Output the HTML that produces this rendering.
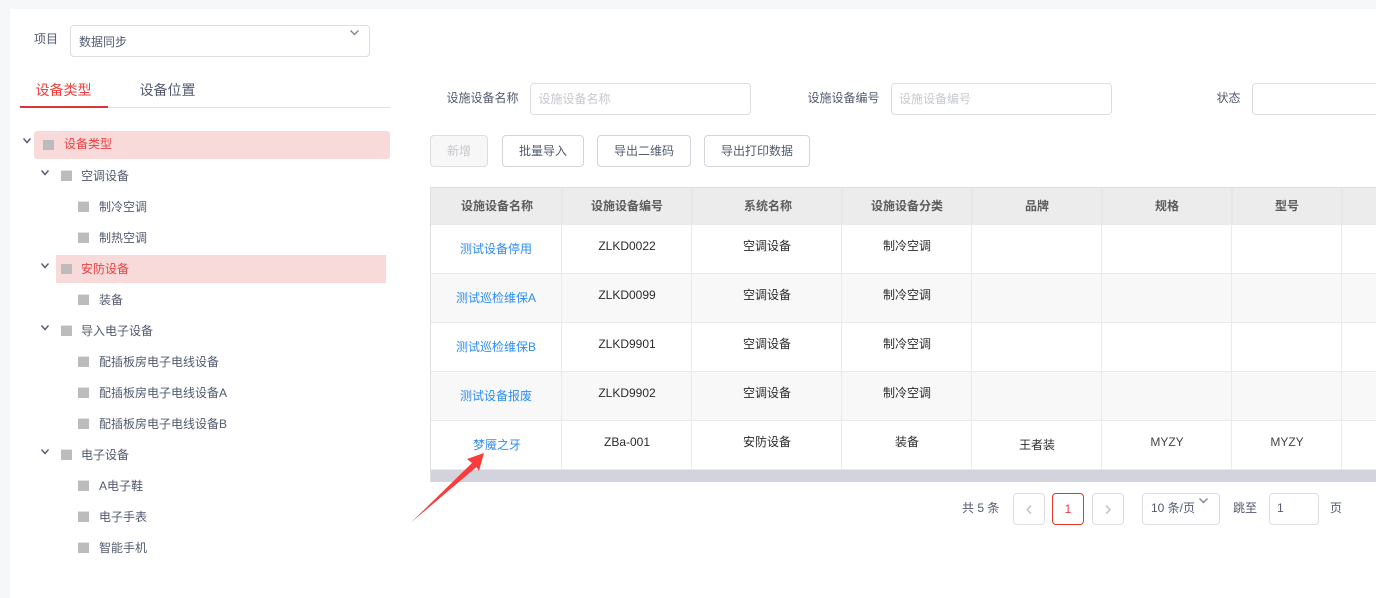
<!DOCTYPE html>
<html lang="zh">
<head>
<meta charset="utf-8">
<title>设施设备</title>
<style>
html,body{margin:0;padding:0;width:1376px;height:598px;overflow:hidden;background:#f5f7f9}
body{position:relative;font-family:"Liberation Sans","Noto Sans CJK SC",sans-serif;font-size:12px;color:#515a6e}
#w{position:absolute;left:10px;top:9px;width:1366px;height:589px;background:#fff}
.a{position:absolute;box-sizing:border-box}
.t{position:absolute;white-space:nowrap;line-height:20px}
.c{position:absolute;white-space:nowrap;line-height:20px;text-align:center;color:#2b2b2b}
.h{position:absolute;white-space:nowrap;line-height:20px;text-align:center;color:#5c5c5c;font-weight:bold;top:196px}
.l{color:#2d8cf0}
.box{position:absolute;box-sizing:border-box;border:1px solid #dcdee2;border-radius:4px;background:#fff}
.btn{position:absolute;box-sizing:border-box;border:1px solid #d3d4dc;border-radius:4px;background:#fff;height:32px;top:135px;line-height:30px;text-align:center;color:#515a6e}
.f{position:absolute;width:11px;height:11px;background:#bcbcbc;border-top:1px solid #e2e2e2;box-sizing:border-box}
.r{color:#ed3f3f}
.v{position:absolute;top:188px;width:1px;height:281px;background:#e8eaec}
.vh{position:absolute;top:188px;width:2px;height:36px;background:#e7e7e9}
.hl{position:absolute;top:224px;left:431px;width:945px;height:1px;background:#e8eaec}
svg{position:absolute;overflow:visible}
</style>
</head>
<body>
<div id="w"></div>

<span class="t" style="left:34px;top:29px">项目</span>
<div class="box" style="left:70px;top:25px;width:300px;height:32px"></div>
<span class="t" style="left:79px;top:32px">数据同步</span>
<svg style="left:350px;top:30px" width="10" height="6"><path d="M0.5 0.5L4.5 4.5L8.5 0.5" fill="none" stroke="#808695" stroke-width="1.4"/></svg>

<span class="t" style="left:35.5px;top:80px;font-size:14px;color:#ed3f3f">设备类型</span>
<span class="t" style="left:139.5px;top:80px;font-size:14px">设备位置</span>
<div class="a" style="left:20px;top:107px;width:370px;height:1px;background:#dcdee2"></div>
<div class="a" style="left:20px;top:106px;width:88px;height:2px;background:#d9363a"></div>

<div class="a" style="left:34px;top:131px;width:356px;height:28px;background:#f9dadb;border-radius:3px"></div>
<div class="a" style="left:56px;top:255px;width:330px;height:28px;background:#f9dadb"></div>

<svg style="left:23px;top:138px" width="9" height="6"><path d="M0.5 0.5L4 4.5L7.5 0.5" fill="none" stroke="#515a6e" stroke-width="1.4"/></svg>
<svg style="left:41px;top:170px" width="9" height="6"><path d="M0.5 0.5L4 4.5L7.5 0.5" fill="none" stroke="#515a6e" stroke-width="1.4"/></svg>
<svg style="left:41px;top:263px" width="9" height="6"><path d="M0.5 0.5L4 4.5L7.5 0.5" fill="none" stroke="#515a6e" stroke-width="1.4"/></svg>
<svg style="left:41px;top:325px" width="9" height="6"><path d="M0.5 0.5L4 4.5L7.5 0.5" fill="none" stroke="#515a6e" stroke-width="1.4"/></svg>
<svg style="left:41px;top:449px" width="9" height="6"><path d="M0.5 0.5L4 4.5L7.5 0.5" fill="none" stroke="#515a6e" stroke-width="1.4"/></svg>

<i class="f" style="left:43px;top:139px"></i><span class="t r" style="left:64px;top:134px">设备类型</span>
<i class="f" style="left:61px;top:170px"></i><span class="t" style="left:81px;top:166px">空调设备</span>
<i class="f" style="left:78px;top:201px"></i><span class="t" style="left:99px;top:197px">制冷空调</span>
<i class="f" style="left:78px;top:232px"></i><span class="t" style="left:99px;top:228px">制热空调</span>
<i class="f" style="left:61px;top:263px"></i><span class="t r" style="left:81px;top:259px">安防设备</span>
<i class="f" style="left:78px;top:294px"></i><span class="t" style="left:99px;top:290px">装备</span>
<i class="f" style="left:61px;top:325px"></i><span class="t" style="left:81px;top:321px">导入电子设备</span>
<i class="f" style="left:78px;top:356px"></i><span class="t" style="left:99px;top:352px">配插板房电子电线设备</span>
<i class="f" style="left:78px;top:387px"></i><span class="t" style="left:99px;top:383px">配插板房电子电线设备A</span>
<i class="f" style="left:78px;top:418px"></i><span class="t" style="left:99px;top:414px">配插板房电子电线设备B</span>
<i class="f" style="left:61px;top:449px"></i><span class="t" style="left:81px;top:445px">电子设备</span>
<i class="f" style="left:78px;top:480px"></i><span class="t" style="left:99px;top:476px">A电子鞋</span>
<i class="f" style="left:78px;top:511px"></i><span class="t" style="left:99px;top:507px">电子手表</span>
<i class="f" style="left:78px;top:542px"></i><span class="t" style="left:99px;top:538px">智能手机</span>

<span class="t" style="left:446.5px;top:88px">设施设备名称</span>
<div class="box" style="left:530px;top:83px;width:221px;height:32px"></div>
<span class="t" style="left:538.5px;top:89px;color:#c5c8ce">设施设备名称</span>
<span class="t" style="left:807.5px;top:88px">设施设备编号</span>
<div class="box" style="left:891px;top:83px;width:221px;height:32px"></div>
<span class="t" style="left:899px;top:89px;color:#c5c8ce">设施设备编号</span>
<span class="t" style="left:1216.5px;top:88px">状态</span>
<div class="box" style="left:1252px;top:83px;width:140px;height:32px"></div>

<div class="btn" style="left:430px;width:58px;background:#f7f7f7;border-color:#dcdee2;color:#c5c8ce">新增</div>
<div class="btn" style="left:502px;width:82px">批量导入</div>
<div class="btn" style="left:597px;width:94px">导出二维码</div>
<div class="btn" style="left:704px;width:106px">导出打印数据</div>

<!-- table -->
<div class="a" style="left:430px;top:187px;width:946px;height:38px;background:#ececec"></div>
<div class="a" style="left:431px;top:274px;width:945px;height:48px;background:#f8f8f8"></div>
<div class="a" style="left:431px;top:372px;width:945px;height:48px;background:#f8f8f8"></div>
<div class="a" style="left:430px;top:187px;width:946px;height:1px;background:#e0e0e3"></div>
<div class="a" style="left:430px;top:187px;width:1px;height:295px;background:#e0e0e3"></div>
<div class="hl"></div>
<div class="hl" style="top:273px"></div>
<div class="hl" style="top:322px"></div>
<div class="hl" style="top:371px"></div>
<div class="hl" style="top:420px"></div>
<div class="v" style="left:561px"></div>
<div class="v" style="left:691px"></div>
<div class="v" style="left:841px"></div>
<div class="v" style="left:971px"></div>
<div class="v" style="left:1101px"></div>
<div class="v" style="left:1231px"></div>
<div class="v" style="left:1341px"></div>
<div class="vh" style="left:561px"></div>
<div class="vh" style="left:691px"></div>
<div class="vh" style="left:841px"></div>
<div class="vh" style="left:971px"></div>
<div class="vh" style="left:1101px"></div>
<div class="vh" style="left:1231px"></div>
<div class="vh" style="left:1341px"></div>
<div class="a" style="left:431px;top:469px;width:945px;height:13px;background:#d3d3dd;border-top:1px solid #e8eaec"></div>

<span class="h" style="left:432px;width:130px">设施设备名称</span>
<span class="h" style="left:562px;width:130px">设施设备编号</span>
<span class="h" style="left:693px;width:150px">系统名称</span>
<span class="h" style="left:842px;width:130px">设施设备分类</span>
<span class="h" style="left:972px;width:130px">品牌</span>
<span class="h" style="left:1102px;width:130px">规格</span>
<span class="h" style="left:1232px;width:110px">型号</span>

<span class="c l" style="left:430px;width:132px;top:239px">测试设备停用</span>
<span class="c" style="left:562px;width:130px;top:236px">ZLKD0022</span>
<span class="c" style="left:692px;width:150px;top:236px">空调设备</span>
<span class="c" style="left:842px;width:130px;top:236px">制冷空调</span>

<span class="c l" style="left:430px;width:132px;top:288px">测试巡检维保A</span>
<span class="c" style="left:562px;width:130px;top:285px">ZLKD0099</span>
<span class="c" style="left:692px;width:150px;top:285px">空调设备</span>
<span class="c" style="left:842px;width:130px;top:285px">制冷空调</span>

<span class="c l" style="left:430px;width:132px;top:337px">测试巡检维保B</span>
<span class="c" style="left:562px;width:130px;top:334px">ZLKD9901</span>
<span class="c" style="left:692px;width:150px;top:334px">空调设备</span>
<span class="c" style="left:842px;width:130px;top:334px">制冷空调</span>

<span class="c l" style="left:430px;width:132px;top:386px">测试设备报废</span>
<span class="c" style="left:562px;width:130px;top:383px">ZLKD9902</span>
<span class="c" style="left:692px;width:150px;top:383px">空调设备</span>
<span class="c" style="left:842px;width:130px;top:383px">制冷空调</span>

<span class="c l" style="left:431px;width:132px;top:435px">梦魇之牙</span>
<span class="c" style="left:562px;width:130px;top:432px">ZBa-001</span>
<span class="c" style="left:692px;width:150px;top:432px">安防设备</span>
<span class="c" style="left:842px;width:130px;top:432px">装备</span>
<span class="c" style="left:972px;width:130px;top:435px">王者装</span>
<span class="c" style="left:1102px;width:130px;top:432px;color:#444">MYZY</span>
<span class="c" style="left:1232px;width:110px;top:432px;color:#444">MYZY</span>

<!-- pagination -->
<span class="t" style="left:962px;top:498px">共 5 条</span>
<div class="box" style="left:1013px;top:493px;width:32px;height:32px"></div>
<svg style="left:1026px;top:505px" width="7" height="10"><path d="M5 0.7L1.2 4.7L5 8.7" fill="none" stroke="#c5c8ce" stroke-width="1.7"/></svg>
<div class="box" style="left:1052px;top:493px;width:32px;height:32px;border-color:#e8352a;color:#ed3f3f;text-align:center;line-height:30px">1</div>
<div class="box" style="left:1092px;top:493px;width:32px;height:32px"></div>
<svg style="left:1105px;top:505px" width="7" height="10"><path d="M1.2 0.7L5 4.7L1.2 8.7" fill="none" stroke="#c5c8ce" stroke-width="1.7"/></svg>
<div class="box" style="left:1142px;top:493px;width:78px;height:32px"></div>
<span class="t" style="left:1151px;top:498px">10 条/页</span>
<svg style="left:1199px;top:498px" width="10" height="6"><path d="M0.5 0.5L4.5 4.5L8.5 0.5" fill="none" stroke="#808695" stroke-width="1.4"/></svg>
<span class="t" style="left:1233px;top:498px">跳至</span>
<div class="box" style="left:1269px;top:493px;width:50px;height:32px"></div>
<span class="t" style="left:1277px;top:498px">1</span>
<span class="t" style="left:1330px;top:498px">页</span>

<!-- arrow -->
<svg style="left:0;top:0" width="1376" height="598"><polygon points="484,453 467,459 472,463 411,522.5 476.5,467 479,471" fill="#f93c3c"/></svg>
</body>
</html>
